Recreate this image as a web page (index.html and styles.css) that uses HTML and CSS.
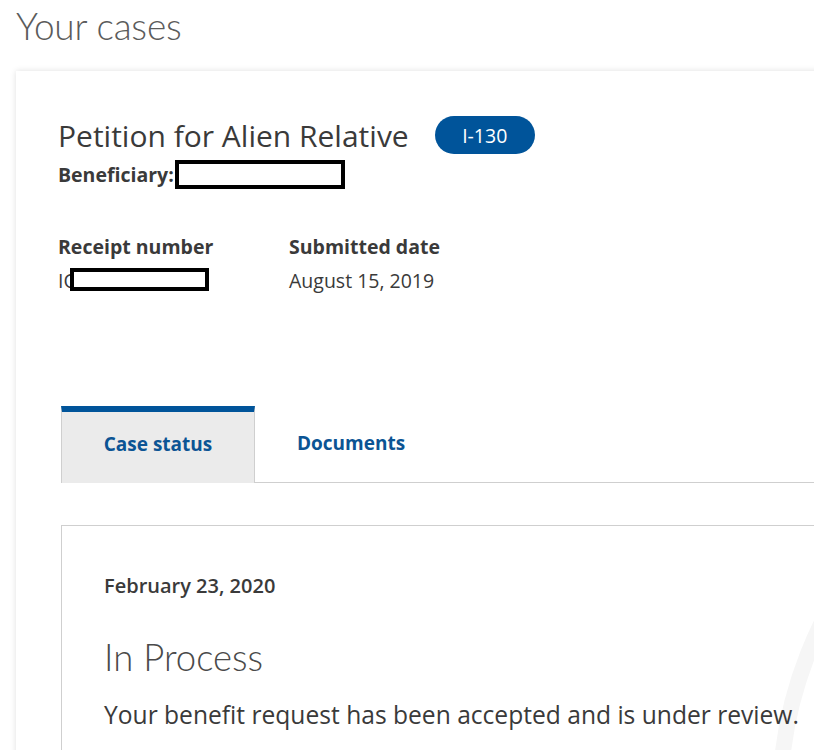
FILE: index.html
```html
<!DOCTYPE html>
<html lang="en">
<head>
<meta charset="utf-8">
<title>Your cases</title>
<link rel="stylesheet" href="styles.css">
</head>
<body>
<div class="page">
  <h1 class="page-title">Your cases</h1>
  <section class="case-card">
    <div class="case-head">
      <div class="title-row">
        <h2 class="case-title">Petition for Alien Relative</h2>
        <span class="form-badge">I-130</span>
      </div>
      <div class="beneficiary">
        <span class="label">Beneficiary:</span><span class="redact redact-ben"></span>
      </div>
      <div class="meta">
        <div class="meta-col meta-receipt">
          <div class="label">Receipt number</div>
          <div class="value receipt-value"><span>IO</span><span class="redact redact-rec"></span></div>
        </div>
        <div class="meta-col">
          <div class="label">Submitted date</div>
          <div class="value">August 15, 2019</div>
        </div>
      </div>
    </div>
    <div class="tabs">
      <div class="tab tab-active">Case status</div>
      <div class="tab">Documents</div>
    </div>
    <div class="tab-body">
      <div class="status-card">
        <svg class="watermark" width="900" height="400" viewBox="0 0 900 400" aria-hidden="true"><circle cx="1118" cy="275" r="400" fill="none" stroke="#f6f6f6" stroke-width="16"/></svg>
        <div class="status-date">February 23, 2020</div>
        <div class="status-title">In Process</div>
        <p class="status-text">Your benefit request has been accepted and is under review.</p>
      </div>
    </div>
  </section>
</div>
</body>
</html>
```
FILE: styles.css
```css
html, body {
  margin: 0;
  padding: 0;
  background: #ffffff;
  overflow: hidden;
}
body {
  font-family: "Open Sans", Lato, "Liberation Sans", sans-serif;
  color: #3a3a3a;
  width: 814px;
  height: 750px;
}
.page {
  padding-left: 16px;
}
.page-title {
  margin: 0;
  padding-top: 3px;
  height: 68px;
  font-family: Lato, "Open Sans", sans-serif;
  font-size: 37px;
  font-weight: 300;
  color: #5b5b5b;
  line-height: 46px;
  letter-spacing: -0.2px;
}
.case-card {
  width: 880px;
  background: #fff;
  box-shadow: 0 0 6px rgba(0, 0, 0, 0.13);
  padding-top: 44px;
}
.case-head {
  padding-left: 42px;
}
.title-row {
  display: flex;
  align-items: center;
  gap: 26px;
  height: 40px;
}
.case-title {
  margin: 0;
  font-size: 30px;
  font-weight: 400;
  color: #3a3a3a;
}
.form-badge {
  display: inline-flex;
  align-items: center;
  justify-content: center;
  width: 100px;
  height: 38px;
  border-radius: 19px;
  background: #00549a;
  color: #fff;
  font-size: 19.5px;
}
.label {
  font-weight: 700;
  font-size: 19.5px;
  color: #3a3a3a;
}
.beneficiary {
  display: flex;
  align-items: center;
  height: 30px;
  margin-top: 4px;
}
.redact {
  display: inline-block;
  box-sizing: border-box;
  border: 4px solid #000;
  background: #fff;
}
.redact-ben {
  width: 170px;
  height: 29px;
  margin-left: 1px;
}
.meta {
  display: flex;
  margin-top: 44px;
}
.meta-col {
  display: flex;
  flex-direction: column;
  gap: 7px;
}
.meta-receipt {
  width: 231px;
}
.value {
  font-size: 19.5px;
  color: #3a3a3a;
  height: 26px;
  display: flex;
  align-items: center;
}
.receipt-value {
  position: relative;
}
.redact-rec {
  position: absolute;
  left: 12px;
  top: 1px;
  width: 139px;
  height: 23px;
}
.tabs {
  display: flex;
  margin-top: 113px;
  margin-left: 45px;
  height: 76px;
  align-items: stretch;
  border-bottom: 1px solid #cfcfcf;
}
.tab {
  display: flex;
  align-items: center;
  justify-content: center;
  font-size: 19px;
  font-weight: 700;
  color: #0b5494;
  padding: 0 42px 8px;
  box-sizing: border-box;
  border-top: 6px solid transparent;
  white-space: nowrap;
}
.tab-active {
  width: 194px;
  padding-left: 0;
  padding-right: 0;
  background: #ebebeb;
  border-top-color: #00549a;
  border-left: 1px solid #cfcfcf;
  border-right: 1px solid #cfcfcf;
  margin-bottom: -1px;
}
.tab-body {
  padding-top: 42px;
  padding-left: 45px;
}
.status-card {
  position: relative;
  overflow: hidden;
  border: 1px solid #cfcfcf;
  height: 300px;
  padding-left: 42px;
  padding-top: 46px;
  box-sizing: border-box;
}
.watermark {
  position: absolute;
  left: 0;
  top: 0;
}
.status-date {
  position: relative;
  font-size: 20px;
  font-weight: 600;
  color: #3a3a3a;
  height: 26px;
}
.status-title {
  position: relative;
  margin-top: 36px;
  font-family: Lato, "Open Sans", sans-serif;
  font-size: 36.5px;
  font-weight: 300;
  color: #4a4a4a;
  line-height: 46px;
}
.status-text {
  position: relative;
  margin: 19px 0 0;
  font-size: 24.6px;
  color: #3a3a3a;
  line-height: 32px;
  white-space: nowrap;
}
```
